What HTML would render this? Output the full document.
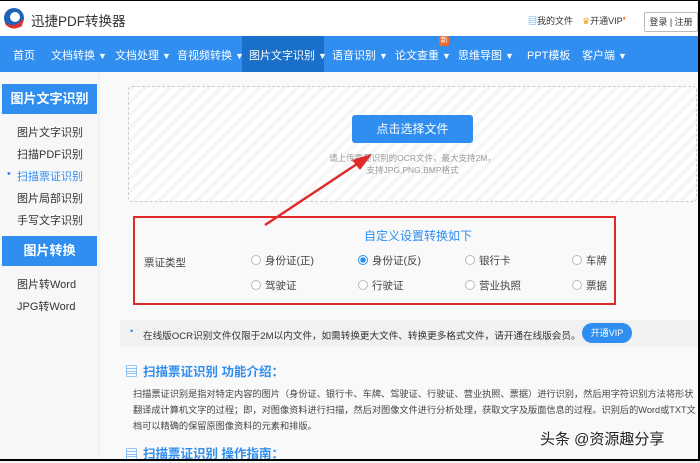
<!DOCTYPE html>
<html><head><meta charset="utf-8"><style>
*{margin:0;padding:0;box-sizing:border-box}
body{width:700px;height:461px;overflow:hidden;background:#f2f2f2;font-family:"Liberation Sans","Noto Sans CJK SC",sans-serif;position:relative;color:#333}
.abs{position:absolute}
.hdr{left:0;top:0;width:700px;height:36px;background:#fff;border-top:1px solid #000}
.nav{left:0;top:36px;width:700px;height:36px;background:#2f8ef0;color:#fff;font-size:11px}
.nav span{position:absolute;top:11px;white-space:nowrap}
.nav b{font-weight:normal;font-size:9px;margin-left:3px}
.side{left:0;top:72px;width:98px;height:389px;background:#f7f7f7}
.st{position:absolute;left:2px;width:95px;height:30px;background:#2f8ef0;color:#fff;font-weight:bold;font-size:13px;text-align:center;line-height:30px}
.si{position:absolute;left:17px;font-size:11px;color:#333}
.main{left:100px;top:72px;width:598px;height:389px;background:#f9f9f9}
.up{left:128px;top:86px;width:569px;height:116px;border:1px dashed #ccc;border-radius:4px;background:repeating-linear-gradient(-45deg,#f6f6f6 0 4px,#fff 4px 9px)}
.btn{left:352px;top:115px;width:121px;height:28px;background:#2f8ef0;border-radius:3px;color:#fff;font-size:12px;text-align:center;line-height:28px}
.red{left:133px;top:216px;width:483px;height:89px;border:2px solid #e02a2a}
.r{position:absolute;font-size:10.5px;color:#444;white-space:nowrap}
.r i{display:inline-block;width:10px;height:10px;border:1px solid #bbb;border-radius:50%;margin-right:4px;vertical-align:-1px;background:#fff}
.note{left:120px;top:320px;width:578px;height:27px;background:#f1f1f1;font-size:9.6px;color:#333}
h3{position:absolute;font-size:12.5px;color:#2f8ef0;font-weight:bold}
.p{left:133px;top:386px;width:565px;font-size:9.2px;line-height:16px;color:#444}
</style></head><body>
<div class="abs hdr">
 <svg class="abs" style="left:2px;top:5px" width="24" height="26" viewBox="0 0 24 26"><circle cx="12" cy="12" r="10" fill="#1e62b8"/><circle cx="13" cy="11" r="5" fill="#fff"/><path d="M3 16 Q12 24 22 12 L20 20 Q10 26 3 18Z" fill="#e03030"/></svg>
 <span class="abs" style="left:31px;top:9px;font-size:13.5px;color:#333">迅捷PDF转换器</span>
 <span class="abs" style="left:528px;top:13px;font-size:9px;color:#333"><span style="color:#2f8ef0">▤</span>我的文件</span>
 <span class="abs" style="left:582px;top:13px;font-size:9px;color:#333"><span style="color:#f0a020">♛</span>开通VIP<sup style="color:#f60;font-size:6px">♦</sup></span>
 <span class="abs" style="left:644px;top:11px;width:54px;height:20px;border:1px solid #bbb;border-radius:2px;font-size:9px;line-height:18px;text-align:center">登录 | 注册</span>
</div>
<div class="abs nav">
 <div class="abs" style="left:242px;top:0;width:82px;height:36px;background:#1a6fc9"></div>
 <span style="left:13px">首页</span><span style="left:51px">文档转换<b>▼</b></span><span style="left:115px">文档处理<b>▼</b></span><span style="left:177px">音视频转换<b>▼</b></span><span style="left:249px">图片文字识别<b>▼</b></span><span style="left:332px">语音识别<b>▼</b></span><span style="left:395px">论文查重<b>▼</b></span><span style="left:458px">思维导图<b>▼</b></span><span style="left:527px">PPT模板</span><span style="left:582px">客户端<b>▼</b></span>
 <div class="abs" style="left:439px;top:0;width:10px;height:10px;background:#f06a2a;font-size:7px;text-align:center;line-height:10px;border-radius:2px">新</div>
</div>
<div class="abs side">
 <div class="st" style="top:12px">图片文字识别</div>
 <div class="si" style="top:52px">图片文字识别</div>
 <div class="si" style="top:74px">扫描PDF识别</div>
 <div class="si" style="top:96px;color:#2f8ef0"><span style="position:absolute;left:-10px">•</span>扫描票证识别</div>
 <div class="si" style="top:118px">图片局部识别</div>
 <div class="si" style="top:140px">手写文字识别</div>
 <div class="st" style="top:164px">图片转换</div>
 <div class="si" style="top:204px">图片转Word</div>
 <div class="si" style="top:226px">JPG转Word</div>
</div>
<div class="abs main"></div>
<div class="abs up"></div>
<div class="abs btn">点击选择文件</div>
<div class="abs" style="left:300px;top:152px;width:225px;text-align:center;font-size:8.5px;color:#999;line-height:12px;white-space:nowrap">请上传需要识别的OCR文件，最大支持2M，<br>支持JPG,PNG,BMP格式</div>
<svg class="abs" style="left:260px;top:140px" width="120" height="90"><line x1="5" y1="85" x2="100" y2="22" stroke="#e02a2a" stroke-width="2.5"/><polygon points="112,14 92,20 100,30" fill="#e02a2a"/></svg>
<div class="abs red">
 <div class="r" style="left:229px;top:9px;font-size:12px;color:#2f8ef0">自定义设置转换如下</div>
 <div class="r" style="left:9px;top:37px">票证类型</div>
 <div class="r" style="left:116px;top:35px"><i></i>身份证(正)</div>
 <div class="r" style="left:223px;top:35px"><i style="border-color:#2f8ef0;background:radial-gradient(#2f8ef0 2.5px,#fff 3px)"></i>身份证(反)</div>
 <div class="r" style="left:330px;top:35px"><i></i>银行卡</div>
 <div class="r" style="left:437px;top:35px"><i></i>车牌</div>
 <div class="r" style="left:116px;top:60px"><i></i>驾驶证</div>
 <div class="r" style="left:223px;top:60px"><i></i>行驶证</div>
 <div class="r" style="left:330px;top:60px"><i></i>营业执照</div>
 <div class="r" style="left:437px;top:60px"><i></i>票据</div>
</div>
<div class="abs note"><span class="abs" style="left:10px;top:6px;color:#2f8ef0">•</span><span class="abs" style="left:23px;top:8px;white-space:nowrap">在线版OCR识别文件仅限于2M以内文件，如需转换更大文件、转换更多格式文件，请开通在线版会员。</span>
<span class="abs" style="left:462px;top:3px;width:50px;height:20px;background:#2f8ef0;color:#fff;border-radius:10px;font-size:9px;text-align:center;line-height:20px">开通VIP</span></div>
<span class="abs" style="left:125px;top:361px;color:#2f8ef0;font-size:13px">▤</span><h3 style="left:143px;top:361px">扫描票证识别 功能介绍：</h3>
<div class="abs p">扫描票证识别是指对特定内容的图片（身份证、银行卡、车牌、驾驶证、行驶证、营业执照、票据）进行识别，然后用字符识别方法将形状翻译成计算机文字的过程；即，对图像资料进行扫描，然后对图像文件进行分析处理，获取文字及版面信息的过程。识别后的Word或TXT文档可以精确的保留原图像资料的元素和排版。</div>
<span class="abs" style="left:125px;top:444px;color:#2f8ef0;font-size:13px">▤</span><h3 style="left:143px;top:443px">扫描票证识别 操作指南：</h3>
<div class="abs" style="left:540px;top:428px;font-size:15px;color:#222;text-shadow:0 0 2px #fff">头条 @资源趣分享</div>
<div class="abs" style="left:698px;top:0;width:2px;height:461px;background:#000"></div>
<div class="abs" style="left:0;top:459px;width:700px;height:2px;background:#000"></div>
</body></html>
